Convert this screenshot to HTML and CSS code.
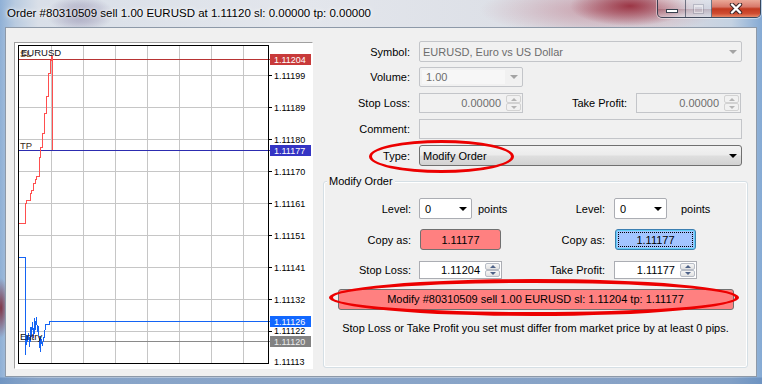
FILE: index.html
```html
<!DOCTYPE html>
<html lang="en">
<head>
    <meta charset="UTF-8">
    <title>Order #80310509</title>
    <link rel="stylesheet" href="styles.css">
</head>
<body>
<div class="window">
    <div class="titlebar">
        <span class="title">Order #80310509 sell 1.00 EURUSD at 1.11120 sl: 0.00000 tp: 0.00000</span>
        <div class="caption">
            <span class="cap-btn cap-min"><i class="ico-min"></i></span>
            <span class="cap-btn cap-max"><i class="ico-max"></i></span>
            <span class="cap-btn cap-close">
                <svg width="14" height="11" viewBox="0 0 14 11"><path d="M3 1.5l8 8M11 1.5l-8 8" stroke="#40282a" stroke-width="4.4" stroke-linecap="round"/><path d="M3 1.5l8 8M11 1.5l-8 8" stroke="#fff" stroke-width="2.4" stroke-linecap="round"/></svg>
            </span>
        </div>
    </div>
    <div class="client">
        <!-- chart -->
        <div class="chart">
            <svg class="plot" width="297" height="325" viewBox="15 43 297 325" font-family="Liberation Sans, Arial, sans-serif">
                <path d="M51.5 46V363M83.5 46V363M115.5 46V363M147.5 46V363M179.5 46V363M211.5 46V363M243.5 46V363M19 75.5H268M19 107.5H268M19 139.5H268M19 171.5H268M19 203.5H268M19 235.5H268M19 267.5H268M19 299.5H268M19 331.5H268" fill="none" stroke="#c6c6c6" stroke-width="1" shape-rendering="crispEdges"/>
                <g shape-rendering="crispEdges" fill="none">
                    <path d="M268 75.5h4M268 107.5h4M268 139.5h4M268 171.5h4M268 203.5h4M268 235.5h4M268 267.5h4M268 299.5h4M268 331.5h4" stroke="#000"/>
                    <path d="M19 59.5H270" stroke="#b83434"/>
                    <path d="M19 150.5H270" stroke="#2c2cb0"/>
                    <path d="M19 341.5H270" stroke="#8a8a8a"/>
                    <path d="M49 321.5H270" stroke="#1464f4"/>
                    <path d="M19 223.5H25.5V203.5H26.5V200.5H30.5V193.5H31.5V190.5H33.5V183.5H35.5V179.5H36.5V176.5H39.5V157.5H40.5V147.5H42.5V133.5H44.5V113.5H46.5V96.5H48.5V73.5H50.5V60.5H51.5V55M52.5 56V150" stroke="#ff4f4f"/>
                    <path d="M19 257.5H25.5V355L26.5 335V345L28.5 333L29.5 347L30.5 327V342L32.5 322L33.5 338L34.5 318V334L36.5 317L37.5 332L38.5 326L39.5 344L40.5 352V336L42.5 346L43.5 338L44.5 337L45.5 324H49.5V321.5" stroke="#1464f4"/>
                    <rect x="18.5" y="45.5" width="250" height="318" stroke="#000"/>
                    <rect x="270" y="54" width="41" height="11" fill="#c83a3a"/>
                    <rect x="270" y="145" width="41" height="11" fill="#3434c4"/>
                    <rect x="270" y="316" width="41" height="11" fill="#1268ff"/>
                    <rect x="270" y="336" width="41" height="11" fill="#828282"/>
                </g>
                <g font-size="9.5">
                    <text x="20" y="57" fill="#7a5220">SL</text>
                    <text x="21" y="56" fill="#101018">EURUSD</text>
                    <text x="20" y="149" fill="#3a2a18">TP</text>
                    <text x="20" y="340" fill="#101010">Entry</text>
                </g>
                <g font-size="9" fill="#000">
                    <text x="274" y="78.5">1.11199</text>
                    <text x="274" y="110.5">1.11189</text>
                    <text x="274" y="142.5">1.11180</text>
                    <text x="274" y="174.5">1.11170</text>
                    <text x="274" y="206.5">1.11161</text>
                    <text x="274" y="238.5">1.11151</text>
                    <text x="274" y="270.5">1.11141</text>
                    <text x="274" y="302.5">1.11132</text>
                    <text x="274" y="334">1.11122</text>
                    <text x="274" y="364.5">1.11113</text>
                </g>
                <g font-size="9" fill="#fff">
                    <text x="274" y="63">1.11204</text>
                    <text x="274" y="154">1.11177</text>
                    <text x="274" y="325">1.11126</text>
                    <text x="274" y="345" fill="#ececec">1.11120</text>
                </g>
            </svg>
        </div>

        <!-- order form -->
        <div class="form">
            <div class="row row-first">
                <span class="lbl">Symbol:</span>
                <div class="combo off w-full"><span class="val">EURUSD, Euro vs US Dollar</span><span class="arr"></span></div>
            </div>
            <div class="row row-vol">
                <span class="lbl">Volume:</span>
                <div class="combo off w-small"><span class="val val-box">1.00</span><span class="arr"></span></div>
            </div>
            <div class="row">
                <span class="lbl">Stop Loss:</span>
                <div class="spin off w-small"><span class="num">0.00000</span><span class="spin-btns"><i class="up"></i><i class="dn"></i></span></div>
                <span class="lbl lbl-tp">Take Profit:</span>
                <div class="spin off w-tp"><span class="num">0.00000</span><span class="spin-btns"><i class="up"></i><i class="dn"></i></span></div>
            </div>
            <div class="row">
                <span class="lbl">Comment:</span>
                <div class="edit off w-full"></div>
            </div>
            <div class="row row-type">
                <span class="lbl">Type:</span>
                <div class="combo list w-full"><span class="val">Modify Order</span><span class="arr"></span></div>
            </div>

            <div class="group">
                <div class="group-title">Modify Order</div>
                <div class="grow">
                    <div class="half">
                        <span class="glbl">Level:</span>
                        <div class="combo lvl"><span class="val">0</span><span class="arr"></span></div>
                        <span class="unit">points</span>
                    </div>
                    <div class="half half-r">
                        <span class="glbl">Level:</span>
                        <div class="combo lvl"><span class="val">0</span><span class="arr"></span></div>
                        <span class="unit">points</span>
                    </div>
                </div>
                <div class="grow">
                    <div class="half">
                        <span class="glbl">Copy as:</span>
                        <div class="copy copy-red">1.11177</div>
                    </div>
                    <div class="half half-r">
                        <span class="glbl">Copy as:</span>
                        <div class="copy copy-blue">1.11177</div>
                    </div>
                </div>
                <div class="grow grow-sl">
                    <div class="half">
                        <span class="glbl">Stop Loss:</span>
                        <div class="spin w-sl"><span class="num">1.11204</span><span class="spin-btns"><i class="up"></i><i class="dn"></i></span></div>
                    </div>
                    <div class="half half-r">
                        <span class="glbl">Take Profit:</span>
                        <div class="spin w-sl"><span class="num">1.11177</span><span class="spin-btns"><i class="up"></i><i class="dn"></i></span></div>
                    </div>
                </div>
                <div class="modify">Modify #80310509 sell 1.00 EURUSD sl: 1.11204 tp: 1.11177</div>
                <p class="note">Stop Loss or Take Profit you set must differ from market price by at least 0 pips.</p>
            </div>
        </div>
    </div>

    <!-- red annotation rings -->
    <div class="ring ring-type"></div>
    <div class="ring ring-btn"></div>
</div>
</body>
</html>
```

FILE: styles.css
```css
body {
    margin: 0;
    background: #fff;
    font-family: "Liberation Sans", Arial, sans-serif;
    font-size: 11px;
    color: #000;
}

.window {
    position: relative;
    width: 762px;
    height: 384px;
    box-sizing: border-box;
    padding: 0 5px 7px;
    display: flex;
    flex-direction: column;
    overflow: hidden;
    background:
        linear-gradient(to bottom, transparent 377px, rgba(100, 138, 186, 0.7) 378px),
        radial-gradient(60px 20px at 630px 6px, rgba(150, 40, 56, 0.9), rgba(150, 40, 56, 0) 100%),
        radial-gradient(120px 26px at 600px 10px, rgba(190, 120, 135, 0.6), rgba(190, 120, 135, 0) 100%),
        radial-gradient(34px 18px at 80px 14px, rgba(110, 100, 145, 0.55), rgba(110, 100, 145, 0) 100%),
        radial-gradient(8px 30px at 1px 308px, rgba(125, 40, 56, 0.9), rgba(125, 40, 56, 0) 100%),
        linear-gradient(to right, #8fb0d6 0, #b9cbe0 2%, #d9dfe8 5%, #e3e6ec 40%, #dcdfe6 70%, #d8d8e0 88%, #c4d2e2 96%, #85aad4 100%);
}

/* title bar */
.titlebar {
    height: 27px;
    flex: none;
    display: flex;
    justify-content: space-between;
    align-items: flex-start;
}

.title {
    padding: 6px 0 0 2px;
    font-size: 11.5px;
    line-height: 14px;
    white-space: nowrap;
    text-shadow: 0 0 6px #fff, 0 0 3px #fff;
}

.caption {
    display: flex;
    height: 18px;
    margin-right: -4px;
    box-sizing: border-box;
    border: 1px solid rgba(40, 52, 72, 0.85);
    border-top: 0;
    border-radius: 0 0 5px 5px;
    overflow: hidden;
    box-shadow: 0 0 0 1px rgba(255, 255, 255, 0.45);
}

.cap-btn {
    display: flex;
    align-items: center;
    justify-content: center;
    height: 100%;
}

.cap-min,
.cap-max {
    border-right: 1px solid rgba(40, 52, 72, 0.6);
    background: linear-gradient(rgba(255, 255, 255, 0.35), rgba(255, 255, 255, 0.12) 50%, rgba(120, 60, 70, 0.2) 51%, rgba(255, 255, 255, 0.25));
}

.cap-min { width: 28px; align-items: flex-end; padding-bottom: 4px; box-sizing: border-box; }
.cap-max { width: 25px; }
.cap-close {
    width: 48px;
    background: linear-gradient(#eaa897, #d8796a 40%, #c2391f 52%, #cf4d32 80%, #e78a6a);
}

.ico-min {
    width: 10px;
    height: 2px;
    background: #fff;
    border: 1px solid #38414e;
}

.ico-max {
    width: 7px;
    height: 5px;
    border: 1px solid rgba(255, 255, 255, 0.7);
    border-top-width: 2px;
    opacity: 0.6;
    box-shadow: 0 0 0 1px rgba(80, 90, 110, 0.4);
}

/* client area */
.client {
    flex: 1;
    display: flex;
    align-items: flex-start;
    background: #f0f0f0;
    border: 1px solid #8d99a8;
}

.chart {
    margin: 14px 7px 0 8px;
    width: 299px;
    height: 327px;
    box-sizing: border-box;
    border: 1px solid;
    border-color: #a0a0a0 #fff #fff #a0a0a0;
    background: #fff;
    flex: none;
}

.plot { display: block; }

/* form */
.form {
    width: 430px;
    margin-top: 13px;
}

.row {
    display: flex;
    align-items: center;
    height: 20px;
    margin-top: 6px;
}

.row-first { margin-top: 0; height: 21px; }
.row-vol { margin-top: 5px; }
.row-type { height: 21px; }

.lbl {
    width: 90px;
    margin-right: 9px;
    text-align: right;
    flex: none;
}

.lbl-tp { width: 104px; }

.w-full { width: 323px; }
.w-small { width: 104px; }
.w-tp { width: 105px; }
.w-sl { width: 83px; }

.combo,
.edit,
.spin {
    box-sizing: border-box;
    height: 100%;
    flex: none;
    border: 1px solid #abadb3;
    background: #fff;
}

.combo {
    display: flex;
    align-items: center;
    border-radius: 2px;
}

.combo .val {
    flex: 1;
    padding-left: 3px;
    white-space: nowrap;
    overflow: hidden;
}

.val-box {
    align-self: stretch;
    margin: 2px 0 2px 2px;
    line-height: 15px;
    background: #f7f7f7;
}

.combo .val-box { padding-left: 4px; }

.arr {
    width: 17px;
    height: 100%;
    display: flex;
    align-items: center;
    justify-content: center;
    flex: none;
}

.arr::before {
    content: "";
    border-left: 4px solid transparent;
    border-right: 4px solid transparent;
    border-top: 4px solid #000;
}

.off {
    border-color: #c3c5c9;
    background: #f1f1f1;
    color: #6d6d6d;
}

.off .arr::before { border-top-color: #a4a4a4; }

.list {
    border-color: #707070;
    border-radius: 3px;
    background: linear-gradient(#f3f3f3, #ececec 45%, #dedede 55%, #d2d2d2);
}

.lvl { width: 53px; }
.lvl .val { padding-left: 5px; }

.spin {
    display: flex;
    align-items: center;
    padding: 1px;
}

.spin .num {
    flex: 1;
    text-align: right;
    padding-right: 5px;
}

.spin-btns {
    width: 15px;
    height: 100%;
    display: flex;
    flex-direction: column;
}

.spin-btns i {
    flex: 1;
    display: flex;
    align-items: center;
    justify-content: center;
    border: 1px solid #b7bcc6;
    border-radius: 2px;
    background: linear-gradient(#f6f6f6, #e2e2e2);
    color: #4e6288;
}

.spin-btns .up::before {
    content: "";
    border-left: 3px solid transparent;
    border-right: 3px solid transparent;
    border-bottom: 3px solid currentColor;
}

.spin-btns .dn::before {
    content: "";
    border-left: 3px solid transparent;
    border-right: 3px solid transparent;
    border-top: 3px solid currentColor;
}

.off .spin-btns i {
    color: #b4b4b4;
    border-color: #d2d2d2;
    background: #f1f1f1;
}

/* group box */
.group {
    margin: 15px 0 0 3px;
    width: 425px;
    height: 187px;
    box-sizing: border-box;
    border: 1px solid #d5dfe5;
    border-radius: 3px;
    box-shadow: inset 0 0 0 1px #fff;
}

.group-title {
    width: fit-content;
    margin: -7px 0 0 3px;
    padding: 0 2px;
    line-height: 13px;
    background: #f0f0f0;
}

.grow {
    display: flex;
    align-items: center;
    height: 21px;
    margin-top: 10px;
}

.grow-sl {
    height: 18px;
    margin-top: 11px;
}

.half {
    width: 196px;
    height: 100%;
    display: flex;
    align-items: center;
}

.half-r { width: auto; }

.glbl {
    width: 87px;
    margin-right: 8px;
    text-align: right;
    flex: none;
}

.half-r .glbl {
    width: 85px;
    margin-right: 9px;
}

.unit { margin-left: 6px; }
.half-r .unit { margin-left: 14px; }

.copy {
    position: relative;
    width: 81px;
    height: 100%;
    box-sizing: border-box;
    display: flex;
    align-items: center;
    justify-content: center;
    border: 1px solid #707070;
    border-radius: 3px;
}

.copy-red {
    margin-left: 1px;
    background: #ff8080;
}

.copy-blue {
    margin-left: 1px;
    background: #a3c5ff;
    border-color: #3c7fb1;
    box-shadow: inset 0 0 0 1px #62cff5;
}

.copy-blue::after {
    content: "";
    position: absolute;
    inset: 2px;
    border: 1px dotted #000;
}

.modify {
    width: 396px;
    height: 21px;
    margin: 10px auto 0;
    box-sizing: border-box;
    border: 1px solid #707070;
    border-radius: 3px;
    background: #ff8080;
    text-align: center;
    line-height: 19px;
}

.note {
    margin: 11px 0 0;
    line-height: 14px;
    text-align: center;
}

/* annotation rings drawn on top */
.ring {
    position: absolute;
    box-sizing: border-box;
    border: 3px solid #ec0000;
    border-radius: 50%;
}

.ring-type {
    left: 369px;
    top: 140px;
    width: 145px;
    height: 33px;
}

.ring-btn {
    left: 329px;
    top: 279px;
    width: 410px;
    height: 37px;
    border-width: 4px;
}
```
